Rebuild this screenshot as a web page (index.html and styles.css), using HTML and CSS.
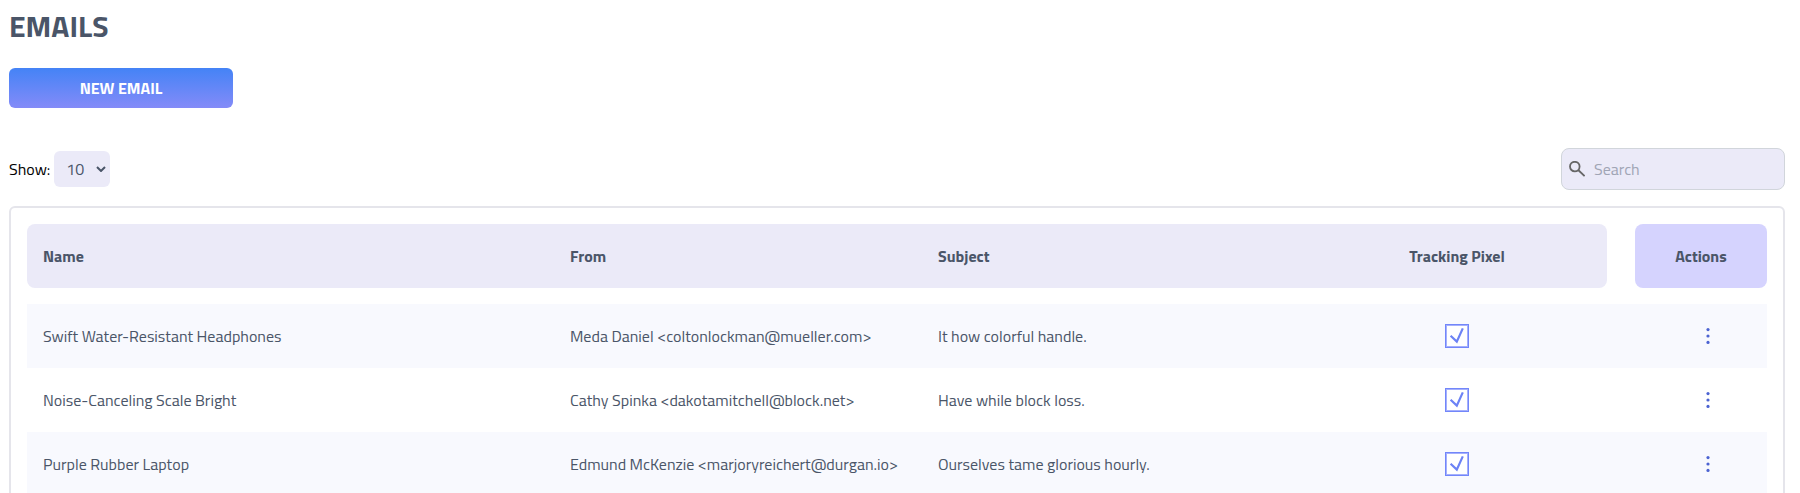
FILE: index.html
```
<!DOCTYPE html>
<html lang="en">
<head>
    <meta charset="UTF-8">
    <meta name="viewport" content="width=device-width, initial-scale=1.0">
    <title>Emails</title>
    <link rel="stylesheet" href="styles.css">
</head>
<body>
    <!-- Icons -->
    <svg class="sprite" aria-hidden="true">
        <symbol id="icon-check" viewBox="0 0 24 24">
            <path d="M5.6 11.8 L11.8 17.6 L17.8 4.4" fill="none" stroke="#6c82f5" stroke-width="2.2"/>
        </symbol>
        <symbol id="icon-dots" viewBox="0 0 4 16">
            <circle cx="2" cy="1.6" r="1.6"/>
            <circle cx="2" cy="8" r="1.6"/>
            <circle cx="2" cy="14.4" r="1.6"/>
        </symbol>
    </svg>

    <h1>EMAILS</h1>
    <button type="button" class="btn-new">NEW EMAIL</button>

    <!-- Toolbar -->
    <div class="toolbar">
        <div class="page-size">
            <label for="page-size">Show:</label>
            <div class="select-wrap">
                <select id="page-size">
                    <option>10</option>
                    <option>25</option>
                    <option>50</option>
                </select>
                <svg class="chevron" viewBox="0 0 10 6" aria-hidden="true">
                    <path d="M1 1 L5 5 L9 1" fill="none" stroke="#4a5568" stroke-width="2"/>
                </svg>
            </div>
        </div>
        <label class="search">
            <svg viewBox="0 0 16 16" aria-hidden="true">
                <circle cx="5.8" cy="5.6" r="4.8" fill="none" stroke="#666" stroke-width="1.8"/>
                <path d="M9.2 9 L15.6 15.2" stroke="#666" stroke-width="1.8"/>
            </svg>
            <input type="search" placeholder="Search" aria-label="Search">
        </label>
    </div>

    <!-- Emails table -->
    <div class="card">
        <table>
            <colgroup>
                <col class="col-name">
                <col class="col-from">
                <col class="col-subject">
                <col class="col-pixel">
                <col class="col-gap">
                <col class="col-actions">
            </colgroup>
            <thead>
                <tr>
                    <th>Name</th>
                    <th>From</th>
                    <th>Subject</th>
                    <th class="center">Tracking Pixel</th>
                    <td class="gap"></td>
                    <th class="actions">Actions</th>
                </tr>
            </thead>
            <tbody>
                <tr>
                    <td>Swift Water-Resistant Headphones</td>
                    <td>Meda Daniel &lt;coltonlockman@mueller.com&gt;</td>
                    <td>It how colorful handle.</td>
                    <td><label class="check"><input type="checkbox" aria-label="Tracking pixel" checked><svg><use href="#icon-check"/></svg></label></td>
                    <td class="gap"></td>
                    <td class="menu"><button type="button" aria-label="Actions"><svg><use href="#icon-dots"/></svg></button></td>
                </tr>
                <tr>
                    <td>Noise-Canceling Scale Bright</td>
                    <td>Cathy Spinka &lt;dakotamitchell@block.net&gt;</td>
                    <td>Have while block loss.</td>
                    <td><label class="check"><input type="checkbox" aria-label="Tracking pixel" checked><svg><use href="#icon-check"/></svg></label></td>
                    <td class="gap"></td>
                    <td class="menu"><button type="button" aria-label="Actions"><svg><use href="#icon-dots"/></svg></button></td>
                </tr>
                <tr>
                    <td>Purple Rubber Laptop</td>
                    <td>Edmund McKenzie &lt;marjoryreichert@durgan.io&gt;</td>
                    <td>Ourselves tame glorious hourly.</td>
                    <td><label class="check"><input type="checkbox" aria-label="Tracking pixel" checked><svg><use href="#icon-check"/></svg></label></td>
                    <td class="gap"></td>
                    <td class="menu"><button type="button" aria-label="Actions"><svg><use href="#icon-dots"/></svg></button></td>
                </tr>
            </tbody>
        </table>
    </div>
</body>
</html>
```

FILE: styles.css
```
* {
    box-sizing: border-box;
    margin: 0;
    padding: 0;
}
body {
    font-family: 'Titillium Web', Roboto, sans-serif;
    font-size: 16px;
    line-height: 24px;
    color: #000;
    background: #fff;
    padding: 8px 15px 0 9px;
}
button,
input,
select {
    font: inherit;
    border: none;
}
.sprite {
    display: none;
}
h1 {
    font-size: 30px;
    line-height: 36px;
    font-weight: 700;
    color: #4a5568;
    margin-bottom: 24px;
}
.btn-new {
    display: block;
    width: 224px;
    height: 40px;
    border-radius: 6px;
    background: linear-gradient(#4483f6, #848bf8);
    color: #fff;
    font-weight: 700;
    cursor: pointer;
}

/* Toolbar */
.toolbar {
    display: flex;
    align-items: center;
    justify-content: space-between;
    margin: 40px 0 16px;
}
.page-size {
    display: flex;
    align-items: center;
    gap: 4px;
}
.select-wrap {
    display: grid;
    align-items: center;
}
.select-wrap > * {
    grid-area: 1 / 1;
}
.select-wrap select {
    appearance: none;
    width: 56px;
    height: 36px;
    padding-left: 12px;
    border-radius: 6px;
    background: #ebeaf8;
    color: #4a5568;
}
.chevron {
    width: 10px;
    height: 6px;
    justify-self: end;
    margin-right: 4px;
    pointer-events: none;
}
.search {
    display: flex;
    align-items: center;
    gap: 9px;
    width: 224px;
    height: 42px;
    padding: 0 7px;
    border: 1px solid #d1d5db;
    border-radius: 8px;
    background: #ebeaf8;
}
.search svg {
    flex: none;
    width: 16px;
    height: 16px;
}
.search input {
    flex: 1;
    min-width: 0;
    background: none;
    outline: none;
}
.search input::placeholder {
    color: #a0a5b5;
}

/* Table */
.card {
    border: 2px solid #e5e5eb;
    border-radius: 6px;
    padding: 16px;
}
table {
    width: 100%;
    table-layout: fixed;
    border-collapse: separate;
    border-spacing: 0;
    color: #4a5568;
}
.col-from {
    width: 368px;
}
.col-subject {
    width: 385px;
}
.col-pixel {
    width: 300px;
}
.col-gap {
    width: 28px;
}
.col-actions {
    width: 132px;
}
th,
td {
    height: 64px;
    padding: 0 16px;
    text-align: left;
}
th {
    background: #ebeaf8;
    font-weight: 700;
}
th:first-child {
    border-radius: 8px 0 0 8px;
}
th.center {
    border-radius: 0 8px 8px 0;
    text-align: center;
}
th.actions {
    background: #d5d3fe;
    border-radius: 8px;
    text-align: center;
}
td.gap {
    padding: 0;
}
tbody::before {
    content: "";
    display: block;
    height: 16px;
}
tbody tr:nth-child(odd) {
    background: #f8f9fe;
}
.check {
    display: grid;
    width: 24px;
    margin: 0 auto;
}
.check > * {
    grid-area: 1 / 1;
    width: 24px;
    height: 24px;
}
.check input {
    appearance: none;
    border: 1px solid #7286fa;
    box-shadow: inset 0 0 0 1px #a5b0fc;
    background: #fff;
}
.check svg {
    position: relative;
    pointer-events: none;
    visibility: hidden;
}
.check input:checked + svg {
    visibility: visible;
}
td.menu {
    padding: 0 16px 0 30px;
}
.menu button {
    display: flex;
    align-items: center;
    justify-content: center;
    width: 24px;
    height: 24px;
    margin: 0 auto;
    background: none;
    cursor: pointer;
}
.menu svg {
    width: 4px;
    height: 16px;
    fill: #4c63d2;
}
```
